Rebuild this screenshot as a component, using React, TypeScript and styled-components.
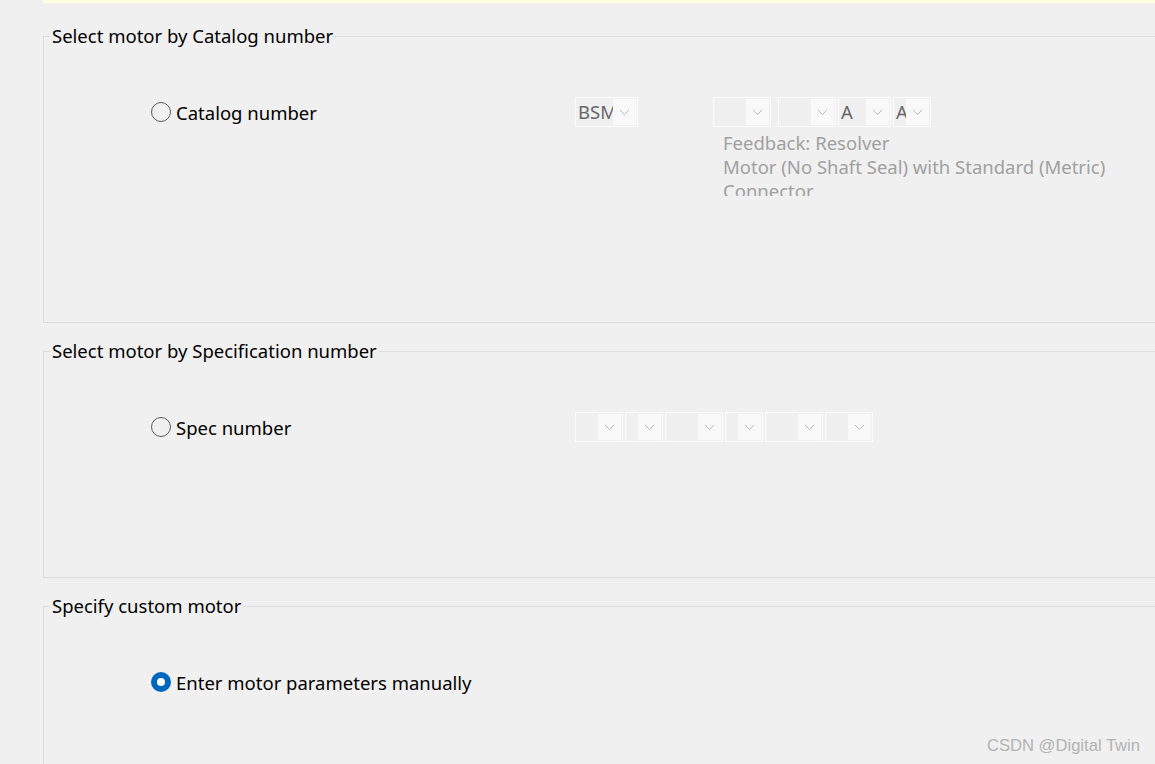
import React from "react";
import styled, { createGlobalStyle } from "styled-components";

const GlobalStyle = createGlobalStyle`
  html, body {
    margin: 0;
    padding: 0;
    background: #f0f0f0;
    overflow: hidden;
  }
  body {
    font-family: "Noto Sans", "Segoe UI", sans-serif;
    color: #000;
  }
`;

const Page = styled.div`
  position: relative;
  width: 1155px;
  height: 764px;
  box-sizing: border-box;
  padding-left: 43px;
  display: flex;
  flex-direction: column;
  overflow: hidden;
`;

const InfoStrip = styled.div`
  height: 3px;
  background: #ffffe3;
  margin-right: -20px;
  margin-bottom: 21px;
  flex-shrink: 0;
`;

const Group = styled.fieldset<{ $gap?: number }>`
  margin: ${(p) => p.$gap ?? 0}px -40px 0 0;
  padding: 0;
  min-width: 0;
  border: 1px solid #dcdcdc;
  flex-shrink: 0;
`;

const Legend = styled.legend`
  margin-left: 6px;
  padding: 0 2px;
  font-size: 18.5px;
  line-height: 24px;
  color: #000;
`;

const Body = styled.div<{ $h: number }>`
  height: ${(p) => p.$h}px;
  box-sizing: border-box;
  padding: 49px 0 0 107px;
`;

const Row = styled.div`
  display: flex;
  align-items: flex-start;
`;

const RadioLabel = styled.label`
  display: flex;
  align-items: center;
  gap: 5px;
  width: 424px;
  height: 30px;
  font-size: 18.5px;
  color: #000;
  flex-shrink: 0;
`;

const Radio = styled.span<{ $checked?: boolean }>`
  box-sizing: border-box;
  width: 20px;
  height: 20px;
  border-radius: 50%;
  flex-shrink: 0;
  display: flex;
  align-items: center;
  justify-content: center;
  border: ${(p) => (p.$checked ? "none" : "1px solid #5c5c5c")};
  background: ${(p) => (p.$checked ? "#0067c0" : "transparent")};
  &::after {
    content: "";
    display: ${(p) => (p.$checked ? "block" : "none")};
    width: 8px;
    height: 8px;
    border-radius: 50%;
    background: #fff;
  }
`;

const ComboBox = styled.div<{ $w: number; $ml?: number }>`
  box-sizing: border-box;
  width: ${(p) => p.$w}px;
  margin-left: ${(p) => p.$ml ?? 0}px;
  height: 30px;
  border: 1px solid #fcfcfc;
  padding: 1px;
  display: flex;
  flex-shrink: 0;
`;

const ComboValue = styled.span`
  flex: 1;
  min-width: 0;
  overflow: hidden;
  white-space: nowrap;
  padding-left: 1px;
  font-size: 18.5px;
  line-height: 26px;
  color: #666666;
`;

const ComboArrow = styled.span`
  width: 23px;
  flex-shrink: 0;
  background: #f9f9f9;
  display: flex;
  align-items: center;
  justify-content: center;
`;

const Column = styled.div<{ $ml: number }>`
  display: flex;
  flex-direction: column;
  margin-left: ${(p) => p.$ml}px;
`;

const ComboRow = styled.div`
  display: flex;
`;

const Note = styled.div`
  margin-top: 4px;
  padding-left: 10px;
  height: 65px;
  overflow: hidden;
  font-size: 18.5px;
  line-height: 24px;
  color: #a0a0a0;
  white-space: nowrap;
`;

const Watermark = styled.div`
  position: absolute;
  right: 15px;
  bottom: 8px;
  font-family: "Liberation Sans", "Noto Sans CJK SC", sans-serif;
  font-size: 16.6px;
  color: #b3b3b3;
`;

const Chevron = () => (
  <svg width="11" height="7" viewBox="0 0 11 7">
    <polyline points="1,1 5.5,5.5 10,1" fill="none" stroke="#b8b8b8" strokeWidth="1" />
  </svg>
);

const Combo: React.FC<{ w: number; ml?: number; value?: string }> = ({ w, ml, value }) => (
  <ComboBox $w={w} $ml={ml}>
    <ComboValue>{value}</ComboValue>
    <ComboArrow>
      <Chevron />
    </ComboArrow>
  </ComboBox>
);

export default function App() {
  const specCombos = [48, 38, 58, 38, 58, 48];
  return (
    <>
      <GlobalStyle />
      <Page>
        <InfoStrip />
        <Group>
          <Legend>Select motor by Catalog number</Legend>
          <Body $h={274}>
            <Row>
              <RadioLabel>
                <Radio />
                Catalog number
              </RadioLabel>
              <Combo w={63} value="BSM" />
              <Column $ml={75}>
                <ComboRow>
                  <Combo w={58} />
                  <Combo w={58} ml={7} />
                  <Combo w={53} ml={2} value="A" />
                  <Combo w={38} ml={2} value="A" />
                </ComboRow>
                <Note>
                  <div>Feedback: Resolver</div>
                  <div>Motor (No Shaft Seal) with Standard (Metric)</div>
                  <div>Connector</div>
                </Note>
              </Column>
            </Row>
          </Body>
        </Group>
        <Group $gap={16}>
          <Legend>Select motor by Specification number</Legend>
          <Body $h={214}>
            <Row>
              <RadioLabel>
                <Radio />
                Spec number
              </RadioLabel>
              <ComboRow>
                {specCombos.map((w, i) => (
                  <Combo key={i} w={w} ml={i === 0 ? 0 : 2} />
                ))}
              </ComboRow>
            </Row>
          </Body>
        </Group>
        <Group $gap={16}>
          <Legend>Specify custom motor</Legend>
          <Body $h={200}>
            <Row>
              <RadioLabel>
                <Radio $checked />
                Enter motor parameters manually
              </RadioLabel>
            </Row>
          </Body>
        </Group>
        <Watermark>CSDN @Digital Twin</Watermark>
      </Page>
    </>
  );
}
